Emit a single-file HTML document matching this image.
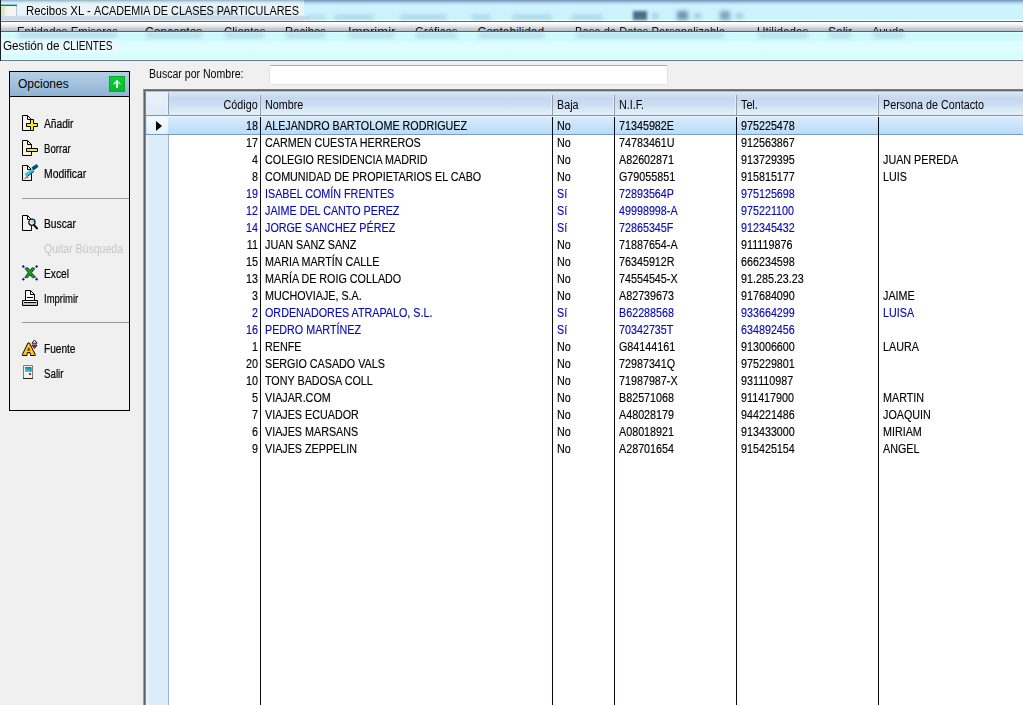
<!DOCTYPE html>
<html lang="es"><head><meta charset="utf-8"><title>Recibos XL</title>
<style>
html,body{margin:0;padding:0}
body{width:1023px;height:705px;overflow:hidden;position:relative;background:#f0f0f0;font-family:"Liberation Sans",sans-serif;font-size:12px;color:#000}
div,span,i{box-sizing:border-box}
.abs{position:absolute}
#glass{left:0;top:0;width:1023px;height:21px;background:linear-gradient(#7d9fbf .5px,#8fb2d0 1.5px,#a9cbe6 2.5px,#b9dcf2 3.5px,#c3e9f9 4.5px,#ccf3fe 5.5px,#cdf3fe 15.5px,#c8f8fe 16.5px,#c6f2f8 17.5px,#cef3f8 18.5px,#d8f5f8 19.5px,#ecfcfd 20.5px)}
#topgrad{display:none}
#lborder{left:0;top:0;width:1px;height:61px;background:#1b1d20}
#menubar{left:1px;top:21px;width:1022px;height:11px;background:linear-gradient(#fff .5px,#fbfbfd 1.5px,#f5f3f8 2.5px,#ebeaf0 3.5px,#e4e6ec 4.5px,#d3d9e0 5.5px,#c6ced6 6.5px,#b8c2c8 8.5px);border-top:1px solid #5f6a6e;border-bottom:1px solid #56626c;overflow:hidden}
#menubar span{position:absolute;top:3px;transform-origin:0 50%;font-size:12px;white-space:nowrap;color:#111}
#childbar{left:1px;top:32px;width:1022px;height:28px;background:linear-gradient(#ddfefe .5px,#d0fbfd 1.5px,#cef9fc 7.5px,#d9fdfe 10px,#dffefe 16px,#d5fdfe 22px,#d6fdfe 26.5px,#eefefe 27.5px)}
#line60{left:0;top:60px;width:1023px;height:1px;background:#6a7c80}
.ttl{white-space:nowrap;font-size:12px;transform-origin:0 50%;display:inline-block}
.bl{background:#6d9bc8;filter:blur(2px);border-radius:2px}
.sh{top:0px;height:6px;background:#7f9fd0;opacity:.33;filter:blur(2.4px)}
/* left panel */
#panel{left:9px;top:71px;width:121px;height:340px;border:1px solid #000;background:#f0f0f0}
#phead{left:0;top:0;width:119px;height:25px;background:linear-gradient(#b5cfe6,#8fb3d4);border-bottom:1px solid #000}
#phead .t{position:absolute;left:8px;top:5px;font-size:12px}
#gbtn{left:99px;top:4px;width:16px;height:16px;background:linear-gradient(#08d436,#04b82a);box-shadow:inset 0 0 0 1px #0aa828}
.mi{position:absolute;left:34px;height:16px;line-height:16px;font-size:12px;white-space:nowrap;-webkit-text-stroke:.2px currentColor}
.mi i,.lbl i{font-style:normal;display:inline-block;transform:scaleX(.88);transform-origin:0 50%}
.sep{position:absolute;left:12px;width:107px;height:1px;background:#9a9a9a}
.ico{position:absolute;left:12px;width:17px;height:17px}
.lbl{left:149px;top:66px;height:16px;line-height:16px;white-space:nowrap}
#inp{left:269px;top:65px;width:399px;height:20px;background:#fff;border:1px solid #dfe3e9;border-top-color:#abadb3;border-radius:2px}
/* grid */
#grid{left:143px;top:89px;width:900px;height:630px;background:#fff;border-left:1px solid #9a9c9e;border-top:1px solid #7d8083}
#gb2{left:144px;top:90px;width:900px;height:630px;border-left:1px solid #606468;border-top:1px solid #606468}
#gb3{left:145px;top:91px;width:900px;height:630px;border-left:1px solid #81878d;border-top:1px solid #b9c1cc}
#ghead{left:146px;top:92px;width:877px;height:23px;background:linear-gradient(#d9e6f6,#c5d8ef 28%,#cbdcf1 50%,#d8e8f7 75%,#e0effa)}
#gheadline{left:146px;top:115px;width:877px;height:1px;background:#7a96b0}
#indcol{left:146px;top:92px;width:22px;height:613px;background:linear-gradient(90deg,#e9f3fc,#ddecfa 6px,#dcecfa)}
#indline{left:168px;top:92px;width:1px;height:613px;background:#9fb2c6}
#sel{left:146px;top:116px;width:877px;height:19px;background:linear-gradient(#d9ebfb,#c8e4fb 50%,#b6dcfa);border-top:1px solid #eef6fd;border-bottom:1px solid #7b9cb8}
.vl{position:absolute;top:117px;width:1px;height:589px;background:#0a0a14}
.hl{position:absolute;top:95px;width:1px;height:20px;background:#8e9eae;box-shadow:-1px 0 0 rgba(236,244,252,.7)}
.h{position:absolute;top:97px;height:16px;line-height:16px;white-space:nowrap;font-size:12.5px}
.h i{font-style:normal;display:inline-block;transform:scaleX(.86);transform-origin:0 50%}
.h.rt i{transform-origin:100% 50%}
.r{position:absolute;left:0;width:1023px;height:17px;line-height:17px;font-size:12.5px;white-space:nowrap;-webkit-text-stroke:.15px currentColor}
.r.b{color:#0808b4}
.r span{position:absolute;top:0;height:17px}
.r i{font-style:normal;display:inline-block;transform:scaleX(.86);transform-origin:0 50%}
.c0{left:169px;width:88.5px;text-align:right}
.r .c0 i{transform-origin:100% 50%}
.c1{left:265px}.c2{left:557px}.c3{left:619px}.c4{left:741px}.c5{left:883px}
#arrow{left:156px;top:120.5px;width:0;height:0;border-left:6px solid #000;border-top:5.5px solid transparent;border-bottom:5.5px solid transparent}
#indhead{left:146px;top:92px;width:22px;height:23px;background:linear-gradient(#eaf2fb,#dfeaf8)}
#indsel{left:147px;top:117px;width:21px;height:17px;background:linear-gradient(#f4f9fe,#e6f1fc);border-radius:2px}
</style></head><body>
<div id="glass" class="abs"></div>
<div id="topgrad" class="abs"></div>
<div id="winicon" class="abs" style="z-index:3;left:1px;top:4px;width:16px;height:12px;background:linear-gradient(90deg,#d2eac2 4px,#eaf6dc 4px,#f2f4e6 7px,#faf0f8 7px,#faf2f6 15px,#b8c8dc 15px)"><div class="abs" style="left:0;top:0;width:16px;height:1px;background:#7cc4ee"></div><div class="abs" style="left:0;top:1px;width:16px;height:1px;background:#2a5cb4"></div><div class="abs" style="left:0;top:2px;width:15px;height:1px;background:#f6f6c4"></div></div>
<div id="fx" class="abs" style="left:0;top:0;width:1023px;height:61px;overflow:hidden;pointer-events:none">
<div class="abs" style="left:1px;top:0;width:303px;height:21px;background:linear-gradient(#9fbccf .5px,#bbd5e2 1.5px,#d2e6ef 2.5px,#dfeff5 3.5px,#e8f4f8 4.5px,#e9f5f9 15px,#cbdbe7 16.5px,#c9d9e6 19.5px,#e4ecf2 20.5px)"></div><div class="abs" style="left:304px;top:16px;width:8px;height:4px;background:linear-gradient(90deg,#c9d9e6,rgba(201,217,230,0))"></div>
<div class="abs bl" style="left:180px;top:10px;width:55px;height:5px;opacity:.25"></div>
<div class="abs bl" style="left:306px;top:15px;width:20px;height:4px;opacity:.3"></div>
<div class="abs bl" style="left:334px;top:15px;width:40px;height:4px;opacity:.4"></div>
<div class="abs bl" style="left:400px;top:15px;width:47px;height:4px;opacity:.4"></div>
<div class="abs bl" style="left:471px;top:15px;width:20px;height:4px;opacity:.4"></div>
<div class="abs bl" style="left:512px;top:15px;width:40px;height:4px;opacity:.4"></div>
<div class="abs bl" style="left:571px;top:15px;width:32px;height:4px;opacity:.4"></div>
<div class="abs" style="left:633px;top:10.5px;width:14px;height:9px;background:#3d5f7c;filter:blur(1.8px);opacity:.9"></div>
<div class="abs bl" style="left:652px;top:14px;width:6px;height:4px;opacity:.7"></div>
<div class="abs" style="left:677px;top:10.5px;width:11px;height:9px;background:#5f84a6;filter:blur(2px);opacity:.85"></div>
<div class="abs bl" style="left:694px;top:14px;width:7px;height:4px;opacity:.7"></div>
<div class="abs" style="left:720px;top:10.5px;width:10px;height:9px;background:#6a90b2;filter:blur(2px);opacity:.8"></div>
<div class="abs bl" style="left:736px;top:14px;width:7px;height:4px;opacity:.7"></div>
</div>
<div class="abs" style="left:26px;top:3px;height:16px;line-height:16px"><span class="ttl" style="transform:scaleX(.95);white-space:pre">Recibos XL - </span><span class="ttl" style="position:absolute;left:68px;top:0;transform:scaleX(.903)">ACADEMIA DE CLASES PARTICULARES</span></div>
<div id="menubar" class="abs">
<span style="left:15.5px;transform:scaleX(0.946)">Entidades Emisoras</span><span style="left:144px;transform:scaleX(1.0)">Conceptos</span><span style="left:222.5px;transform:scaleX(0.957)">Clientes</span><span style="left:284px;transform:scaleX(0.946)">Recibos</span><span style="left:346.5px;transform:scaleX(1.096)">Imprimir</span><span style="left:414px;transform:scaleX(0.951)">Gráficos</span><span style="left:476.5px;transform:scaleX(1.0)">Contabilidad</span><span style="left:573.5px;transform:scaleX(0.933)">Base de Datos Personalizable</span><span style="left:756px;transform:scaleX(0.977)">Utilidades</span><span style="left:827px;transform:scaleX(1.0)">Salir</span><span style="left:871px;transform:scaleX(0.96)">Ayuda</span>
</div>
<div id="childbar" class="abs"></div>
<div id="fx2" class="abs" style="left:0;top:32px;width:1023px;height:28px;overflow:hidden;pointer-events:none">
<div class="abs" style="left:1px;top:5px;width:118px;height:19px;background:linear-gradient(rgba(232,250,252,0),#e8fafc 3px,#eafafc 15px,rgba(232,250,252,0))"></div>
<div class="abs sh" style="left:17.5px;width:99px"></div><div class="abs sh" style="left:146px;width:55.5px"></div><div class="abs sh" style="left:224.5px;width:39.5px"></div><div class="abs sh" style="left:286px;width:39px"></div><div class="abs sh" style="left:348.5px;width:45.5px"></div><div class="abs sh" style="left:416px;width:40.5px"></div><div class="abs sh" style="left:478.5px;width:65px"></div><div class="abs sh" style="left:575.5px;width:148px"></div><div class="abs sh" style="left:758px;width:49.5px"></div><div class="abs sh" style="left:829px;width:22px"></div><div class="abs sh" style="left:873px;width:30.5px"></div>
</div>
<div class="abs" style="left:3px;top:38px;height:16px;line-height:16px"><span class="ttl" style="transform:scaleX(.975);white-space:pre">Gestión de </span><span class="ttl" style="position:absolute;left:60px;top:0;transform:scaleX(.843)">CLIENTES</span></div>
<div id="line60" class="abs"></div>
<div id="lborder" class="abs"></div>

<div id="panel" class="abs">
 <div id="phead" class="abs"><span class="t">Opciones</span><div id="gbtn" class="abs"><svg width="16" height="16" viewBox="0 0 16 16" style="position:absolute;left:0;top:0"><path d="M8 4.6V12" stroke="#fff" stroke-width="2" fill="none"/><path d="M4.6 8.2L8 4.8L11.4 8.2" stroke="#eaffea" stroke-width="1.3" fill="none" opacity=".85"/></svg></div></div>
 <div class="mi" style="top:44px"><i style="transform:scaleX(0.85)">Añadir</i></div>
 <div class="mi" style="top:69px"><i style="transform:scaleX(0.8)">Borrar</i></div>
 <div class="mi" style="top:94px"><i style="transform:scaleX(0.865)">Modificar</i></div>
 <div class="sep" style="top:126px"></div>
 <div class="mi" style="top:144px"><i style="transform:scaleX(0.854)">Buscar</i></div>
 <div class="mi" style="top:169px;color:#c6c6c6;-webkit-text-stroke:0"><i style="transform:scaleX(0.877)">Quitar Búsqueda</i></div>
 <div class="mi" style="top:194px"><i style="transform:scaleX(0.853)">Excel</i></div>
 <div class="mi" style="top:219px"><i style="transform:scaleX(0.79)">Imprimir</i></div>
 <div class="sep" style="top:250px"></div>
 <div class="mi" style="top:269px"><i style="transform:scaleX(0.843)">Fuente</i></div>
 <div class="mi" style="top:294px"><i style="transform:scaleX(0.81)">Salir</i></div>
</div>

<div class="abs lbl"><i>Buscar por Nombre:</i></div>
<div id="inp" class="abs"></div>

<div id="grid" class="abs"></div><div id="gb2" class="abs"></div><div id="gb3" class="abs"></div>
<div id="indcol" class="abs"></div>
<div id="ghead" class="abs"></div>
<div id="gheadline" class="abs"></div>
<div id="indline" class="abs"></div>
<div id="sel" class="abs"></div><div id="indhead" class="abs"></div><div id="indsel" class="abs"></div>
<div class="hl" style="left:168px"></div><div class="hl" style="left:260px"></div><div class="hl" style="left:552px"></div><div class="hl" style="left:614px"></div><div class="hl" style="left:736px"></div><div class="hl" style="left:878px"></div>
<div class="vl" style="left:260px"></div><div class="vl" style="left:552px"></div><div class="vl" style="left:614px"></div><div class="vl" style="left:736px"></div><div class="vl" style="left:878px"></div>
<div class="h rt" style="left:169px;width:89px;text-align:right"><i>Código</i></div>
<div class="h" style="left:265px"><i>Nombre</i></div>
<div class="h" style="left:557px"><i>Baja</i></div>
<div class="h" style="left:619px"><i>N.I.F.</i></div>
<div class="h" style="left:741px"><i>Tel.</i></div>
<div class="h" style="left:883px"><i>Persona de Contacto</i></div>
<div id="arrow" class="abs"></div>
<div class="r" style="top:118px"><span class="c0"><i>18</i></span><span class="c1"><i>ALEJANDRO BARTOLOME RODRIGUEZ</i></span><span class="c2"><i>No</i></span><span class="c3"><i>71345982E</i></span><span class="c4"><i>975225478</i></span><span class="c5"><i></i></span></div>
<div class="r" style="top:135px"><span class="c0"><i>17</i></span><span class="c1"><i>CARMEN CUESTA HERREROS</i></span><span class="c2"><i>No</i></span><span class="c3"><i>74783461U</i></span><span class="c4"><i>912563867</i></span><span class="c5"><i></i></span></div>
<div class="r" style="top:152px"><span class="c0"><i>4</i></span><span class="c1"><i>COLEGIO RESIDENCIA MADRID</i></span><span class="c2"><i>No</i></span><span class="c3"><i>A82602871</i></span><span class="c4"><i>913729395</i></span><span class="c5"><i>JUAN PEREDA</i></span></div>
<div class="r" style="top:169px"><span class="c0"><i>8</i></span><span class="c1"><i>COMUNIDAD DE PROPIETARIOS EL CABO</i></span><span class="c2"><i>No</i></span><span class="c3"><i>G79055851</i></span><span class="c4"><i>915815177</i></span><span class="c5"><i>LUIS</i></span></div>
<div class="r b" style="top:186px"><span class="c0"><i>19</i></span><span class="c1"><i>ISABEL COMÍN FRENTES</i></span><span class="c2"><i>Sí</i></span><span class="c3"><i>72893564P</i></span><span class="c4"><i>975125698</i></span><span class="c5"><i></i></span></div>
<div class="r b" style="top:203px"><span class="c0"><i>12</i></span><span class="c1"><i>JAIME DEL CANTO PEREZ</i></span><span class="c2"><i>Sí</i></span><span class="c3"><i>49998998-A</i></span><span class="c4"><i>975221100</i></span><span class="c5"><i></i></span></div>
<div class="r b" style="top:220px"><span class="c0"><i>14</i></span><span class="c1"><i>JORGE SANCHEZ PÉREZ</i></span><span class="c2"><i>Sí</i></span><span class="c3"><i>72865345F</i></span><span class="c4"><i>912345432</i></span><span class="c5"><i></i></span></div>
<div class="r" style="top:237px"><span class="c0"><i>11</i></span><span class="c1"><i>JUAN SANZ SANZ</i></span><span class="c2"><i>No</i></span><span class="c3"><i>71887654-A</i></span><span class="c4"><i>911119876</i></span><span class="c5"><i></i></span></div>
<div class="r" style="top:254px"><span class="c0"><i>15</i></span><span class="c1"><i>MARIA MARTÍN CALLE</i></span><span class="c2"><i>No</i></span><span class="c3"><i>76345912R</i></span><span class="c4"><i>666234598</i></span><span class="c5"><i></i></span></div>
<div class="r" style="top:271px"><span class="c0"><i>13</i></span><span class="c1"><i>MARÍA DE ROIG COLLADO</i></span><span class="c2"><i>No</i></span><span class="c3"><i>74554545-X</i></span><span class="c4"><i>91.285.23.23</i></span><span class="c5"><i></i></span></div>
<div class="r" style="top:288px"><span class="c0"><i>3</i></span><span class="c1"><i>MUCHOVIAJE, S.A.</i></span><span class="c2"><i>No</i></span><span class="c3"><i>A82739673</i></span><span class="c4"><i>917684090</i></span><span class="c5"><i>JAIME</i></span></div>
<div class="r b" style="top:305px"><span class="c0"><i>2</i></span><span class="c1"><i>ORDENADORES ATRAPALO, S.L.</i></span><span class="c2"><i>Sí</i></span><span class="c3"><i>B62288568</i></span><span class="c4"><i>933664299</i></span><span class="c5"><i>LUISA</i></span></div>
<div class="r b" style="top:322px"><span class="c0"><i>16</i></span><span class="c1"><i>PEDRO MARTÍNEZ</i></span><span class="c2"><i>Sí</i></span><span class="c3"><i>70342735T</i></span><span class="c4"><i>634892456</i></span><span class="c5"><i></i></span></div>
<div class="r" style="top:339px"><span class="c0"><i>1</i></span><span class="c1"><i>RENFE</i></span><span class="c2"><i>No</i></span><span class="c3"><i>G84144161</i></span><span class="c4"><i>913006600</i></span><span class="c5"><i>LAURA</i></span></div>
<div class="r" style="top:356px"><span class="c0"><i>20</i></span><span class="c1"><i>SERGIO CASADO VALS</i></span><span class="c2"><i>No</i></span><span class="c3"><i>72987341Q</i></span><span class="c4"><i>975229801</i></span><span class="c5"><i></i></span></div>
<div class="r" style="top:373px"><span class="c0"><i>10</i></span><span class="c1"><i>TONY BADOSA COLL</i></span><span class="c2"><i>No</i></span><span class="c3"><i>71987987-X</i></span><span class="c4"><i>931110987</i></span><span class="c5"><i></i></span></div>
<div class="r" style="top:390px"><span class="c0"><i>5</i></span><span class="c1"><i>VIAJAR.COM</i></span><span class="c2"><i>No</i></span><span class="c3"><i>B82571068</i></span><span class="c4"><i>911417900</i></span><span class="c5"><i>MARTIN</i></span></div>
<div class="r" style="top:407px"><span class="c0"><i>7</i></span><span class="c1"><i>VIAJES ECUADOR</i></span><span class="c2"><i>No</i></span><span class="c3"><i>A48028179</i></span><span class="c4"><i>944221486</i></span><span class="c5"><i>JOAQUIN</i></span></div>
<div class="r" style="top:424px"><span class="c0"><i>6</i></span><span class="c1"><i>VIAJES MARSANS</i></span><span class="c2"><i>No</i></span><span class="c3"><i>A08018921</i></span><span class="c4"><i>913433000</i></span><span class="c5"><i>MIRIAM</i></span></div>
<div class="r" style="top:441px"><span class="c0"><i>9</i></span><span class="c1"><i>VIAJES ZEPPELIN</i></span><span class="c2"><i>No</i></span><span class="c3"><i>A28701654</i></span><span class="c4"><i>915425154</i></span><span class="c5"><i>ANGEL</i></span></div>
<!-- icons -->
<svg class="abs" style="left:21px;top:115px" width="19" height="17" viewBox="0 0 19 17"><path d="M1.5 .5H6.5L10.5 4.5V15.5H1.5Z" fill="#f7efe8" stroke="#000"/><path d="M6.5 .5V4.5H10.5" fill="none" stroke="#000"/><path d="M9.5 4.5H12.5V8.5H16.5V11.5H12.5V15.5H9.5V11.5H5.5V8.5H9.5Z" fill="#f6ee08" stroke="#000"/></svg>
<svg class="abs" style="left:21px;top:140px" width="19" height="17" viewBox="0 0 19 17"><path d="M1.5 .5H6.5L10.5 4.5V15.5H1.5Z" fill="#f7efe8" stroke="#000"/><path d="M6.5 .5V4.5H10.5" fill="none" stroke="#000"/><path d="M5.5 8.5H16.5V11.5H5.5Z" fill="#f2e626" stroke="#000"/></svg>
<svg class="abs" style="left:21px;top:163px;overflow:visible" width="19" height="19" viewBox="0 -2 19 19"><path d="M1.5 .5H6.5L10.5 4.5V15.5H1.5Z" fill="#f7efe8" stroke="#000"/><path d="M6.5 .5V4.5H10.5" fill="none" stroke="#000"/><path d="M2.6 14.4L5.8 10.4L8.2 12.4Z" fill="#8f957f"/><path d="M3.5 8.9L11 3.4L13 6.2L5.5 11.7Z" fill="#2ccfd8"/><path d="M6.5 11.2L13 6.4" stroke="#0a2a78" stroke-width="1"/><path d="M10.5 2.6L15.5 -1.1L17.5 1.7L12.5 5.4Z" fill="#0b4a78"/></svg>
<svg class="abs" style="left:21px;top:215px" width="19" height="17" viewBox="0 0 19 17"><path d="M1.5 .5H6.5L10.5 4.5V15.5H1.5Z" fill="#f7efe8" stroke="#000"/><path d="M6.5 .5V4.5H10.5" fill="none" stroke="#000"/><circle cx="10.9" cy="7.3" r="3.1" fill="#dff0fa" stroke="#0c1c26" stroke-width="1.3"/><circle cx="11.6" cy="6.8" r="1.3" fill="#9cc8e6"/><path d="M12.8 9.9L16.6 14" stroke="#000" stroke-width="2"/></svg>
<svg class="abs" style="left:21px;top:264px" width="18" height="18" viewBox="0 0 18 18"><path d="M4 4.2L7 3.8L8.9 6.6L11 3.8L13.8 4.4L10.5 8.8L14.6 13.2L11.5 13.8L8.9 10.8L6.5 13.8L3.8 13.4L7.1 8.8Z" fill="#238f32" stroke="#0d5c1a" stroke-width="1"/><g fill="#10109c"><path d="M2.3 .9L3.8 2.4L2.3 3.9L.8 2.4Z"/><path d="M15.6 .9L17.1 2.4L15.6 3.9L14.1 2.4Z"/><path d="M2.3 13.8L3.8 15.3L2.3 16.8L.8 15.3Z"/><path d="M15.6 13.8L17.1 15.3L15.6 16.8L14.1 15.3Z"/></g></svg>
<svg class="abs" style="left:21px;top:289px" width="18" height="18" viewBox="0 0 18 18"><path d="M4.5 11V1.5H9.5L13.5 5.5V11" fill="#fbfbfb" stroke="#000"/><path d="M9.5 1.5V5.5H13.5" fill="none" stroke="#000"/><path d="M6 8.5H12" stroke="#000"/><path d="M1.5 11.5H16.5V16.5H1.5Z" fill="#c4c4c4" stroke="#000"/><rect x="3" y="12" width="12" height="1" fill="#fff"/><path d="M3 13.5H15" stroke="#000"/></svg>
<svg class="abs" style="left:21px;top:339px" width="18" height="18" viewBox="0 0 18 18"><path d="M7 4L1.4 15.4V16.5H6V15.4L6.4 13.6H9L9.5 15.4V16.5H14.2V15.4L8.4 4Z" fill="#ffc814" stroke="#000" stroke-width="1"/><path d="M7.7 8.8L6.8 11.4H8.6Z" fill="#e8d8f0" stroke="#201020" stroke-width=".8"/><path d="M13.5 1L16.1 4.2H10.9Z" fill="#fff" stroke="#000" stroke-width=".9"/><path d="M10.9 6H16.1L13.5 9.5Z" fill="#c82838" stroke="#2a1a10" stroke-width=".9"/></svg>
<svg class="abs" style="left:21px;top:364px" width="18" height="18" viewBox="0 0 18 18"><path d="M2.5 1.5H11.5V14.5H2.5Z" fill="#f1f1ee" stroke="#857a7a"/><path d="M2 14.5H12" stroke="#222"/><rect x="4.2" y="3.2" width="6.2" height="4.5" fill="#14bcc4"/><rect x="4.2" y="3.2" width="6.2" height="1.2" fill="#1a6a8a"/><rect x="9" y="4" width="1.4" height="3.7" fill="#1088a8"/><rect x="8.1" y="9.1" width="1.8" height="1.9" fill="#8a1024"/></svg>

</body></html>
